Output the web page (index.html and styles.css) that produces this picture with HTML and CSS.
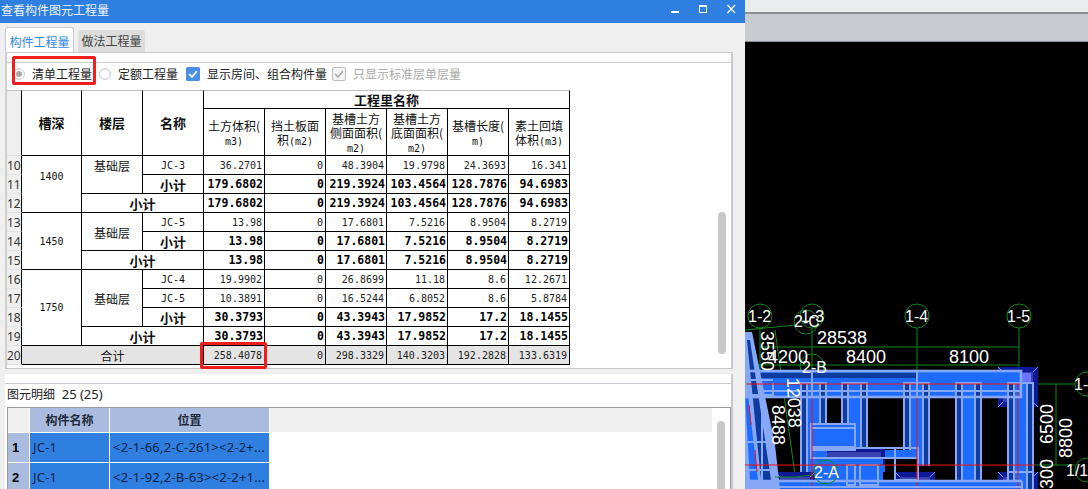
FILE: index.html
```html
<!DOCTYPE html>
<html>
  <head>
    <meta charset="utf-8">
    <link rel="stylesheet" href="styles.css">
  </head>
  <body>
    <div class="dialog">
      <div class="titlebar">
        <span class="title">查看构件图元工程量</span>
        <svg class="win-btns" width="66" height="10" viewBox="0 0 66 10">
          <rect x="0" y="7" width="8" height="2" fill="#fff"/>
          <rect x="28.5" y="1.5" width="7" height="7" fill="none" stroke="#fff"/>
          <rect x="28" y="1" width="8" height="2" fill="#fff"/>
          <path d="M56.5 1 L64 9 M64 1 L56.5 9" stroke="#fff" stroke-width="1.3"/>
        </svg>
      </div>

      <div class="tabs">
        <div class="tab active">构件工程量</div>
        <div class="tab">做法工程量</div>
      </div>

      <div class="pane">
        <div class="inner">
          <div class="toolbar">
            <svg class="radio" width="12" height="12" viewBox="0 0 12 12">
              <circle cx="6" cy="6" r="5.4" fill="#fff" stroke="#c4c4c4"/>
              <circle cx="6" cy="6" r="3" fill="#a8a8a8"/>
            </svg>
            <span class="lbl lbl-qd">清单工程量</span>
            <svg class="radio" width="12" height="12" viewBox="0 0 12 12">
              <circle cx="6" cy="6" r="5.4" fill="#fff" stroke="#c4c4c4"/>
            </svg>
            <span class="lbl lbl-de">定额工程量</span>
            <svg class="check" width="14" height="14" viewBox="0 0 14 14">
              <rect width="14" height="14" rx="1.5" fill="#4a90e8"/>
              <path d="M3.2 7 L6 10 L10.8 4.2" fill="none" stroke="#fff" stroke-width="1.8"/>
            </svg>
            <span class="lbl lbl-room">显示房间、组合构件量</span>
            <svg class="check" width="14" height="14" viewBox="0 0 14 14">
              <rect x=".5" y=".5" width="13" height="13" rx="1.5" fill="#f4f4f4" stroke="#bcbcbc"/>
              <path d="M3.2 7 L6 10 L10.8 4.2" fill="none" stroke="#a8a8a8" stroke-width="1.6"/>
            </svg>
            <span class="lbl off">只显示标准层单层量</span>
          </div>

          <div class="table-area">
            <table class="qty">
              <colgroup>
                <col class="c-rn">
                <col class="c-first">
                <col class="c"><col class="c"><col class="c"><col class="c">
                <col class="c"><col class="c"><col class="c"><col class="c">
              </colgroup>
              <thead>
                <tr class="h1">
                  <th class="rn" rowspan="2"></th>
                  <th class="bold" rowspan="2">槽深</th>
                  <th class="bold" rowspan="2">楼层</th>
                  <th class="bold" rowspan="2">名称</th>
                  <th class="group" colspan="6">工程里名称</th>
                </tr>
                <tr class="h2">
                  <th>土方体积(<br><span class="en">m3)</span></th>
                  <th>挡土板面<br>积<span class="en">(m2)</span></th>
                  <th>基槽土方<br>侧面面积(<br><span class="en">m2)</span></th>
                  <th>基槽土方<br>底面面积(<br><span class="en">m2)</span></th>
                  <th>基槽长度(<br><span class="en">m)</span></th>
                  <th>素土回填<br>体积<span class="en">(m3)</span></th>
                </tr>
              </thead>
              <tbody>
                <tr>
                  <td class="rn">10</td>
                  <td class="en mid cut" rowspan="3">1400</td>
                  <td class="cn cut-floor" rowspan="2">基础层</td>
                  <td class="en mid">JC-3</td>
                  <td class="n">36.2701</td><td class="n">0</td><td class="n">48.3904</td><td class="n">19.9798</td><td class="n">24.3693</td><td class="n">16.341</td>
                </tr>
                <tr class="sub">
                  <td class="rn">11</td>
                  <td class="bold">小计</td>
                  <td class="n">179.6802</td><td class="n">0</td><td class="n">219.3924</td><td class="n">103.4564</td><td class="n">128.7876</td><td class="n">94.6983</td>
                </tr>
                <tr class="sub">
                  <td class="rn">12</td>
                  <td class="bold" colspan="2">小计</td>
                  <td class="n">179.6802</td><td class="n">0</td><td class="n">219.3924</td><td class="n">103.4564</td><td class="n">128.7876</td><td class="n">94.6983</td>
                </tr>
                <tr>
                  <td class="rn">13</td>
                  <td class="en mid" rowspan="3">1450</td>
                  <td class="cn" rowspan="2">基础层</td>
                  <td class="en mid">JC-5</td>
                  <td class="n">13.98</td><td class="n">0</td><td class="n">17.6801</td><td class="n">7.5216</td><td class="n">8.9504</td><td class="n">8.2719</td>
                </tr>
                <tr class="sub">
                  <td class="rn">14</td>
                  <td class="bold">小计</td>
                  <td class="n">13.98</td><td class="n">0</td><td class="n">17.6801</td><td class="n">7.5216</td><td class="n">8.9504</td><td class="n">8.2719</td>
                </tr>
                <tr class="sub">
                  <td class="rn">15</td>
                  <td class="bold" colspan="2">小计</td>
                  <td class="n">13.98</td><td class="n">0</td><td class="n">17.6801</td><td class="n">7.5216</td><td class="n">8.9504</td><td class="n">8.2719</td>
                </tr>
                <tr>
                  <td class="rn">16</td>
                  <td class="en mid" rowspan="4">1750</td>
                  <td class="cn" rowspan="3">基础层</td>
                  <td class="en mid">JC-4</td>
                  <td class="n">19.9902</td><td class="n">0</td><td class="n">26.8699</td><td class="n">11.18</td><td class="n">8.6</td><td class="n">12.2671</td>
                </tr>
                <tr>
                  <td class="rn">17</td>
                  <td class="en mid">JC-5</td>
                  <td class="n">10.3891</td><td class="n">0</td><td class="n">16.5244</td><td class="n">6.8052</td><td class="n">8.6</td><td class="n">5.8784</td>
                </tr>
                <tr class="sub">
                  <td class="rn">18</td>
                  <td class="bold">小计</td>
                  <td class="n">30.3793</td><td class="n">0</td><td class="n">43.3943</td><td class="n">17.9852</td><td class="n">17.2</td><td class="n">18.1455</td>
                </tr>
                <tr class="sub">
                  <td class="rn">19</td>
                  <td class="bold" colspan="2">小计</td>
                  <td class="n">30.3793</td><td class="n">0</td><td class="n">43.3943</td><td class="n">17.9852</td><td class="n">17.2</td><td class="n">18.1455</td>
                </tr>
                <tr class="total">
                  <td class="rn">20</td>
                  <td class="cn" colspan="3">合计</td>
                  <td class="n">258.4078</td><td class="n">0</td><td class="n">298.3329</td><td class="n">140.3203</td><td class="n">192.2828</td><td class="n">133.6319</td>
                </tr>
              </tbody>
            </table>
            <div class="pill pill-up"></div>
          </div>
        </div>
      </div>

      <div class="splitter"></div>

      <div class="lower">
        <div class="lower-inner">
          <div class="caption">图元明细 <span class="count">25 (25)</span></div>
          <div class="detail">
            <div class="detail-grid">
              <div class="corner"></div>
              <div class="dh">构件名称</div>
              <div class="dh">位置</div>
              <div class="corner filler"></div>

              <div class="drn">1</div>
              <div class="dc">JC-1</div>
              <div class="dc">&lt;2-1-66,2-C-261&gt;&lt;2-2+...</div>
              <div></div>

              <div class="drn">2</div>
              <div class="dc">JC-1</div>
              <div class="dc">&lt;2-1-92,2-B-63&gt;&lt;2-2+1...</div>
              <div></div>
            </div>
            <div class="pill pill-down"></div>
          </div>
        </div>
      </div>

      <div class="mark mark-qd"></div>
      <div class="mark mark-total"></div>
    </div>

    <div class="cad">
      <div class="cad-strip"></div>
      <div class="cad-bar"></div>
      <svg class="cad-view" viewBox="745 42 343 447" width="343" height="447">
        <defs>
          <g id="col">
            <rect class="n" x="0" y="0" width="27" height="106"/>
            <rect class="b" x="8" y="0" width="11" height="106"/>
            <rect class="l" x="1" y="0" width="25" height="106"/>
            <path class="l" d="M7 0 V106 M20 0 V106"/>
          </g>
          <g id="pad">
            <rect x="0" y="0" width="40" height="40" fill="#0d1a96"/>
            <rect x="5" y="5" width="30" height="30" fill="#3a41b0"/>
            <path d="M0 0 L5 5 M40 0 L35 5 M0 40 L5 35 M40 40 L35 35" stroke="#8f98e8"/>
          </g>
        </defs>

        <!-- axis lines -->
        <path class="g" d="M760 328 V375 M812 328 V375 M917 328 V375 M1019 328 V375"/>
        <path class="g" d="M760 347 H1019 M745 365 H1019 M745 330 L796 325"/>
        <path class="g" d="M1035 384 H1075 M1056 384 V465 M1035 465 H1075"/>
        <path class="g" d="M775 330 L795 475"/>
        <circle class="g" cx="760" cy="316" r="12"/>
        <circle class="g" cx="812" cy="316" r="12"/>
        <circle class="g" cx="806" cy="322" r="12"/>
        <circle class="g" cx="917" cy="316" r="12"/>
        <circle class="g" cx="1019" cy="316" r="12"/>
        <circle class="g" cx="812" cy="366" r="12"/>
        <circle class="g" cx="1087" cy="384" r="12"/>
        <circle class="g" cx="1087" cy="470" r="12"/>

        <!-- foundation pads under the beams -->
        <use href="#pad" x="998" y="367"/>
        <rect x="1020" y="373" width="11" height="10" fill="#6a74ff"/>

        <rect class="b" x="745" y="372" width="276" height="25"/>
        <rect class="n" x="745" y="373" width="172" height="5"/>

        <use href="#col" x="800" y="383"/>
        <use href="#col" x="841" y="383"/>
        <use href="#col" x="903" y="383"/>
        <use href="#col" x="955" y="383"/>
        <use href="#col" x="1007" y="383"/>
        <rect x="903" y="466" width="28" height="23" fill="#000"/>

        <!-- pit box and its beam -->
        <rect class="b" x="811" y="424" width="44" height="26"/>
        <rect class="b" x="811" y="450" width="107" height="39"/>
        <rect x="827" y="450" width="56" height="15" fill="#3a41b0"/>
        <path d="M827 450 H883 V465" fill="none" stroke="#0d1a96" stroke-width="4"/>
        <rect class="b" x="812" y="458" width="71" height="31"/>
        <rect x="885" y="458" width="33" height="14" fill="#000"/>
        <rect x="883" y="472" width="35" height="17" fill="#000"/>
        <use href="#pad" x="895" y="472"/>
        <use href="#pad" x="998" y="472"/>
        <use href="#pad" x="775" y="472"/>
        <use href="#col" x="1007" y="472"/>
        <rect class="b" x="745" y="481" width="277" height="8"/>

        <rect class="l" x="811" y="424" width="44" height="26"/>
        <path class="l" d="M811 428 H855 M811 447 H855"/>
        <rect class="l" x="811" y="448" width="107" height="10"/>
        <rect class="l" x="847" y="465" width="8" height="20"/>
        <rect class="l" x="860" y="465" width="18" height="20"/>
        <rect class="l" x="895" y="448" width="23" height="32"/>

        <!-- slanted beams on the left edge -->
        <polygon points="745,332 752,332 775,445 780,489 745,489" fill="#86a8f7"/>
        <polygon points="747,340 750,340 771,480 761,480" fill="#0f3a9e"/>
        <polygon points="745,395 748,395 758,480 750,480" fill="#1d6cff"/>
        <path class="l" d="M745 380 H773 M745 395 H773 M745 442 H768 M745 470 H775 M762 383 V489 M773 383 V397"/>

        <!-- red axes -->
        <path class="r" d="M745 384 H1020 M745 465 H1035 M1018 384 V489 M917 398 V489 M812 398 V489"/>
        <path class="r" d="M749 405 L751 425 M755 450 L757 472"/>

        <!-- top beam outlines -->
        <rect class="l l-beam" x="745" y="371" width="276" height="26"/>
        <path class="l" d="M760 391 H1021 M812 397 V371 M917 397 V371"/>
        <path class="l l-beam" d="M745 481 H1022"/>
        <path class="l" d="M745 487 H1022 M1022 481 V489"/>

        <!-- axis 2-A goes over the beams -->
        <path class="g" d="M775 477 H795 L812 475"/>
        <circle class="g" cx="826" cy="472" r="12"/>

        <!-- dimensions -->
        <text class="t" x="817" y="344">28538</text>
        <text class="t" x="768" y="363">4200</text>
        <text class="t" x="846" y="363">8400</text>
        <text class="t" x="949" y="363">8100</text>
        <text class="t" transform="translate(761 331) rotate(90)">3550</text>
        <text class="t" transform="translate(787 378) rotate(88)">12038</text>
        <text class="t" transform="translate(772 405) rotate(90)">8488</text>
        <text class="t" transform="translate(1053 444) rotate(-90)">6500</text>
        <text class="t" transform="translate(1072 458) rotate(-90)">8800</text>
        <text class="t" transform="translate(1053 489) rotate(-90)">300</text>

        <text class="t lab" x="748" y="322">1-2</text>
        <text class="t lab" x="801" y="322">1-3</text>
        <text class="t lab" x="794" y="327">2-C</text>
        <text class="t lab" x="905" y="322">1-4</text>
        <text class="t lab" x="1007" y="322">1-5</text>
        <text class="t lab" x="802" y="373">2-B</text>
        <text class="t lab" x="814" y="478">2-A</text>
        <text class="t lab" x="1074" y="390">1-</text>
        <text class="t lab" x="1066" y="476">1/1</text>
      </svg>
    </div>
  </body>
</html>
```

FILE: styles.css
```css
body {
  margin: 0;
  display: flex;
  width: 1088px;
  height: 489px;
  overflow: hidden;
  background: #000;
  font-family: "Noto Sans CJK SC", "Liberation Sans", sans-serif;
  font-size: 12px;
  color: #111;
}

.dialog {
  position: relative;
  flex: 0 0 745px;
  height: 489px;
  overflow: hidden;
  display: flex;
  flex-direction: column;
  background: #efefef;
}

.titlebar {
  flex: 0 0 23px;
  display: flex;
  justify-content: space-between;
  align-items: center;
  padding: 0 8px 0 1px;
  box-sizing: border-box;
  background: #2e7fe0;
}

.title {
  color: #eef3fb;
  line-height: 18px;
  margin-top: -4px;
}

.win-btns {
  margin-top: -5px;
}

/* Tabs */
.tabs {
  flex: 0 0 29px;
  display: flex;
  align-items: flex-end;
  gap: 4px;
  padding: 0 0 0 5px;
  box-sizing: border-box;
}

.tab {
  width: 67px;
  height: 22px;
  line-height: 21px;
  text-align: center;
  background: #dcdcdc;
  color: #444;
  border-radius: 3px 3px 0 0;
}

.tab.active {
  width: 69px;
  height: 25px;
  line-height: 27px;
  background: #fff;
  color: #2e86e8;
  border: 1px solid #c8c8d0;
  border-bottom: none;
  box-sizing: border-box;
}

/* Upper pane */
.pane {
  flex: 0 0 317px;
  box-sizing: border-box;
  width: 728px;
  margin-left: 5px;
  padding-top: 9px;
  background: #fff;
  border-top: 1px solid #c8c8d0;
  border-left: 2px solid #cfcfcf;
  border-right: 2px solid #c8c8d0;
  border-bottom: 1px solid #c4c4c4;
}

.inner {
  border-top: 1px solid #c8c8d0;
}

.toolbar {
  height: 27px;
  box-sizing: border-box;
  padding: 0 0 6px 6px;
  display: flex;
  align-items: center;
}

.radio, .check {
  flex: none;
}

.lbl {
  line-height: 16px;
  color: #222;
}

.lbl-qd { margin: 0 7px 0 7px; }
.lbl-de { margin: 0 8px 0 7px; }
.lbl-room { margin: 0 5px 0 7px; }
.off { margin-left: 7px; color: #aaa; }

.table-area {
  display: flex;
  justify-content: space-between;
  align-items: flex-start;
  padding-right: 5px;
}

.pill {
  width: 8px;
  background: #c8c8c8;
  border-radius: 4px;
}

.pill-up {
  height: 142px;
  margin-top: 122px;
}

/* Quantity table */
.qty {
  table-layout: fixed;
  width: 563px;
  border-collapse: separate;
  border-spacing: 0;
}

.c-rn { width: 15px; }
.c-first { width: 60px; }
.c { width: 61px; }

.qty th, .qty td {
  box-sizing: border-box;
  padding: 0;
  border-right: 1px solid #000;
  border-bottom: 1px solid #000;
  text-align: center;
  font-weight: normal;
  line-height: 14.5px;
  white-space: nowrap;
}

.qty td {
  height: 19px;
  line-height: 17px;
  overflow: hidden;
}

.h1 th {
  height: 19px;
  border-top: 1px solid #bfbfbf;
  line-height: 16px;
}

.qty .h2 th {
  height: 47px;
  padding-top: 2px;
  line-height: 14px;
  color: #111;
}

.h2 .en {
  line-height: 10px;
}

.qty .rn {
  background: #efefef;
  font-family: "Noto Sans", sans-serif;
  font-size: 12px;
  text-align: left;
  color: #333;
  border-bottom: 1px solid #e2e2e2;
}

.qty .bold {
  font-size: 13px;
  font-weight: bold;
}

.qty .group {
  font-size: 13px;
  font-weight: bold;
}

.en {
  font-family: "DejaVu Sans Mono", monospace;
  font-size: 10px;
}

.qty .cn {
  padding-top: 1px;
}

.qty .n {
  font-family: "DejaVu Sans Mono", monospace;
  font-size: 10px;
  text-align: right;
  padding-right: 2px;
  color: #222;
}

.sub .n {
  font-size: 11.5px;
  font-weight: bold;
  color: #000;
  padding-right: 1px;
}

/* first rows of these groups are scrolled off the top */
.qty .cut {
  padding-bottom: 16px;
}

.qty .cut-floor {
  padding-bottom: 19px;
}

.total td {
  background: #e4e4e4;
}

.total .rn {
  background: #efefef;
}

/* Splitter and lower pane */
.splitter {
  flex: 0 0 5px;
}

.lower {
  flex: 1;
  box-sizing: border-box;
  width: 728px;
  margin-left: 5px;
  padding-top: 9px;
  background: #fff;
  border-right: 2px solid #c8c8d0;
}

.lower-inner {
  border-top: 1px solid #c8c8d0;
  padding-left: 2px;
}

.caption {
  height: 23px;
  line-height: 19px;
  color: #222;
}

.count {
  font-family: "Noto Sans", sans-serif;
  font-size: 13px;
  margin-left: 4px;
}

.detail {
  display: flex;
  width: 724px;
  box-sizing: border-box;
  border: 1px solid #9a9aa2;
  border-bottom: none;
}

.detail-grid {
  flex: 0 0 704px;
  display: grid;
  grid-template-columns: 21px 79px 159px 1fr;
  grid-template-rows: 24px 29px 29px;
  gap: 1px;
}

.corner {
  background: #efefef;
}

.dh {
  background: #a9bcdf;
  text-align: center;
  font-weight: bold;
  line-height: 24px;
  color: #1f2a3a;
}

.drn {
  background: #a9bcdf;
  font-family: "Liberation Sans", sans-serif;
  font-size: 13px;
  font-weight: bold;
  line-height: 29px;
  padding-left: 4px;
  color: #000;
}

.dc {
  background: #2e7fe0;
  font-family: "Noto Sans", sans-serif;
  font-size: 13px;
  letter-spacing: 0.2px;
  line-height: 28px;
  padding-left: 3px;
  color: #0a2248;
  overflow: hidden;
  white-space: nowrap;
}

.pill-down {
  height: 80px;
  margin: 13px 0 0 5px;
}

/* Red annotations drawn over the dialog */
.mark {
  position: absolute;
  box-sizing: border-box;
  border: 3px solid #f01d1d;
  border-radius: 2px;
}

.mark-qd {
  left: 12px;
  top: 56px;
  width: 84px;
  height: 29px;
}

.mark-total {
  left: 200px;
  top: 342px;
  width: 67px;
  height: 27px;
}

/* CAD drawing on the right */
.cad {
  flex: 1;
  display: flex;
  flex-direction: column;
}

.cad-strip {
  flex: 0 0 14px;
  box-sizing: border-box;
  background: #e9edee;
  border-bottom: 2px solid #8b8f92;
}

.cad-bar {
  flex: 0 0 28px;
  box-sizing: border-box;
  background: #c8cbd0;
  border-bottom: 1px solid #8e9196;
}

.cad-view {
  display: block;
  background: #000;
}

.cad-view .g { fill: none; stroke: #0c8a1c; stroke-width: 1; }
.cad-view .r { fill: none; stroke: #f01010; stroke-width: 1; }
.cad-view .b { fill: #1d6cff; }
.cad-view .n { fill: #0f3a9e; }
.cad-view .l { fill: none; stroke: #86a8f7; stroke-width: 2; }
.cad-view .l-beam { stroke-width: 2.6; }
.cad-view .t {
  fill: #fff;
  font-family: "Liberation Sans", sans-serif;
  font-size: 18px;
}
.cad-view .lab { font-size: 16px; }
```
